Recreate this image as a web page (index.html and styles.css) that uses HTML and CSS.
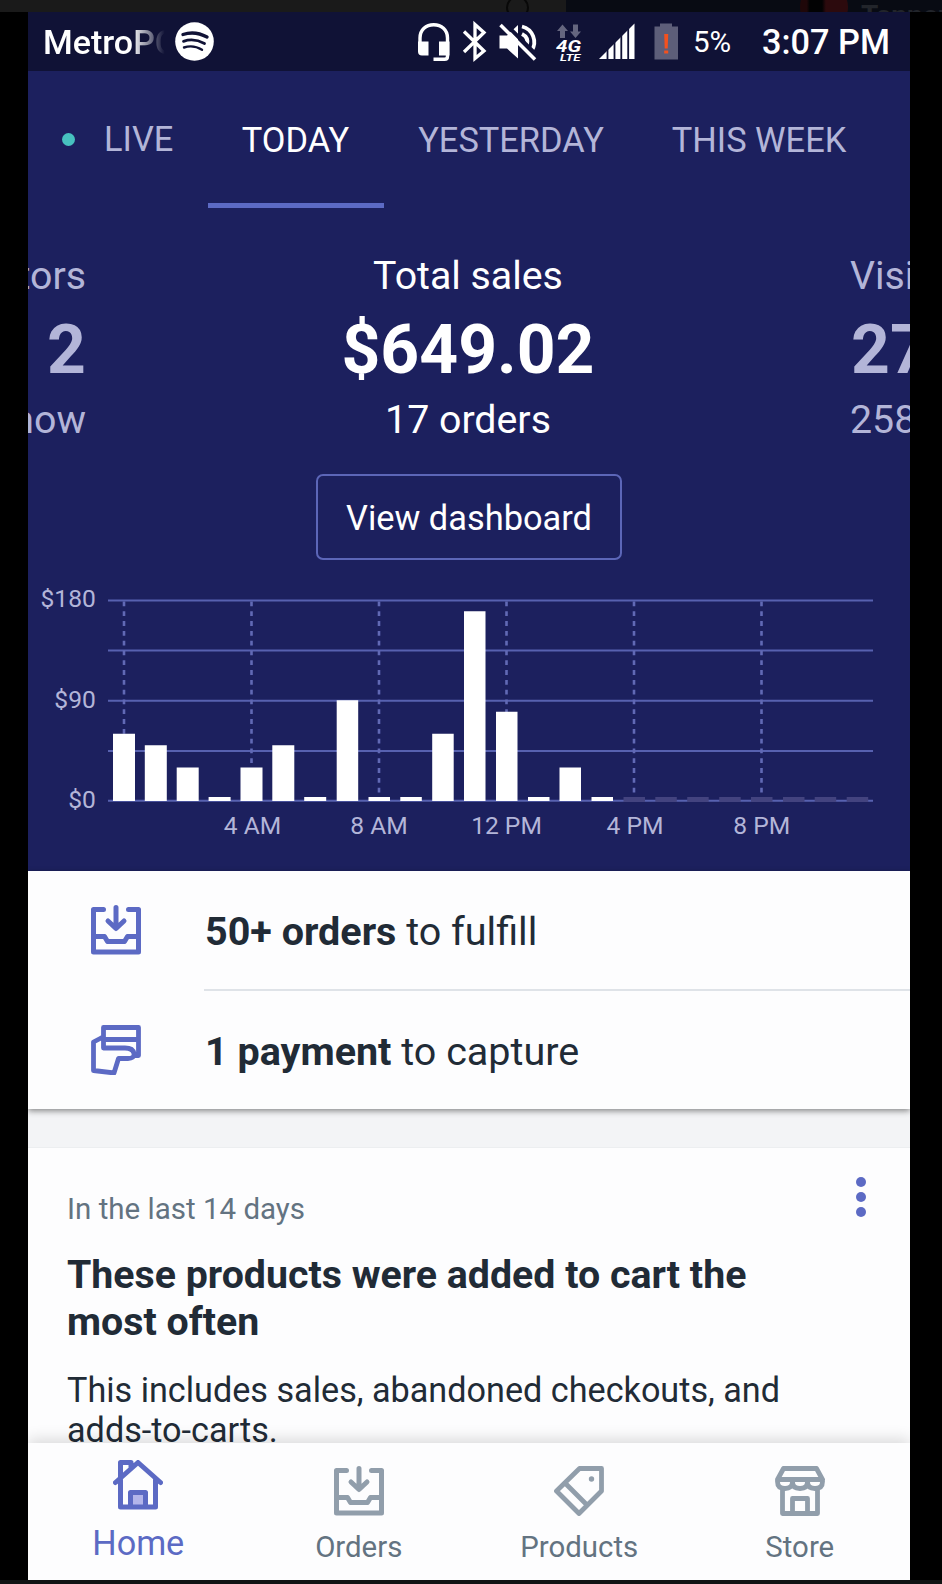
FILE: index.html
```html
<!DOCTYPE html>
<html lang="en">
<head>
<meta charset="utf-8">
<title>Store home</title>
<link rel="stylesheet" href="styles.css">
</head>
<body>
<svg class="sprite" aria-hidden="true">
  <symbol id="inbox" viewBox="0 0 50 50">
    <path d="M12.5 4.5H2.5V47H47.500V4.500H37.500M2.500 31.500H13.500L16.500 36.500H33.500L36.500 31.500H47.500M25 2.500V22M17 16L25 23.500L33 16" fill="none" stroke="currentColor" stroke-width="5" stroke-linecap="round" stroke-linejoin="round"/>
  </symbol>
</svg>
<div class="screen">
  <div class="backdrop">
    <div class="backdrop-left"><span class="ring"></span></div>
    <div class="backdrop-right"><span class="avatar"></span><span class="person">Tanner</span></div>
  </div>
  <main class="phone">
    <header class="status">
      <span class="carrier">MetroPC</span>
      <svg class="spotify" width="39" height="39" viewBox="0 0 39 39"><circle cx="19.500" cy="19.500" r="19.300" fill="#fff"/><g fill="none" stroke="#101236" stroke-linecap="round"><path d="M8 12.500Q20 8.500 32 15" stroke-width="3.400"/><path d="M8.500 19.300Q19 15.800 29.500 21.500" stroke-width="2.800"/><path d="M9 25.500Q18.500 22.500 27 27.800" stroke-width="2.400"/></g></svg>
      <svg class="tray" width="270" height="44" viewBox="414 20 270 44">
        <path d="M420 44V38C420 29.500 426 24.800 433.700 24.800S447.500 29.500 447.500 38V56.500Q447.500 59.300 444.500 59.300H433.500" fill="none" stroke="#fff" stroke-width="3.400"/>
        <path d="M418 41.500H428.500V55.500H422Q418 55.500 418 51.500ZM439 41.500H449.500V55.500H439Z" fill="#fff"/>
        <path d="M464 31.500L484 51L475 58.500V24.500L484 32.500L464 52" fill="none" stroke="#fff" stroke-width="3.300"/>
        <path d="M499.500 35.500H507L518 25V58.500L507 48.500H499.500Z" fill="#fff"/>
        <path d="M522 26.500A16 16 0 0 1 531.500 51M522 34Q529 37.500 527 45" fill="none" stroke="#fff" stroke-width="3.800"/>
        <path d="M504 22.500L538 56.500" stroke="#101236" stroke-width="4"/>
        <path d="M500.500 25L535 59.500" stroke="#fff" stroke-width="3.500"/>
        <path d="M562.500 24.500L568 31H565V38H560V31H557ZM575.500 38L570 31.500H573V24.500H578V31.500H581Z" fill="#65667f"/>
        <text class="net" x="556" y="52.300" textLength="25" lengthAdjust="spacingAndGlyphs">4G</text>
        <text class="lte" x="560" y="61.300" textLength="20.500" lengthAdjust="spacingAndGlyphs">LTE</text>
        <path d="M599 59L634.500 23.500V59Z" fill="#fff"/>
        <path d="M607.500 45V60M614.500 38V60M621.300 31V60M628.200 25V60" stroke="#101236" stroke-width="1.800"/>
        <path d="M654.500 26.500H660V23.500H672V26.500H678V59.500H654.500Z" fill="#5d5e79"/>
        <path d="M664.200 34H668.200L667.700 48.500H664.700ZM664.200 50.500H668.200V53.500H664.200Z" fill="#f4511e"/>
      </svg>
      <span class="percent">5%</span>
      <span class="clock">3:07 PM</span>
    </header>
    <section class="hero">
      <nav class="tabs">
        <span class="tab live"><i class="dot"></i><b>LIVE</b></span>
        <span class="tab active"><b>TODAY</b></span>
        <span class="tab yesterday"><b>YESTERDAY</b></span>
        <span class="tab week"><b>THIS WEEK</b></span>
      </nav>
      <div class="metrics">
        <div class="metric prev"><div class="name">Visitors</div><div class="value">2</div><div class="note">right now</div></div>
        <div class="metric current"><div class="name">Total sales</div><div class="value">$649.02</div><div class="note">17 orders</div></div>
        <div class="metric next"><div class="name">Visitors</div><div class="value">273</div><div class="note">258 visits</div></div>
      </div>
      <button class="dashboard">View dashboard</button>
      <svg class="chart" width="882" height="283" viewBox="28 588 882 283">
        <path class="grid" d="M108 600.600H873M108 650.500H873M108 700.800H873M108 751H873M108 800.800H873"/>
        <path class="ticks" d="M124 601.500V800M251.500 601.500V800M379 601.500V800M506.500 601.500V800M634 601.500V800M761.500 601.500V800"/>
        <path class="bars" d="M113 733.700h22V801h-22zM144.800 745.300h22V801h-22zM176.700 767.500h22V801h-22zM208.600 797h22V801h-22zM240.500 767.500h22V801h-22zM272.300 745.300h22V801h-22zM304.200 797h22V801h-22zM336.700 700.300h21.500V801h-21.500zM368.500 797h21.500V801h-21.500zM400.300 797h21.500V801h-21.500zM432.200 733.700h21.500V801h-21.500zM464 611.300h21.500V801h-21.500zM496 711.700h21.500V801h-21.500zM528 797h21.500V801h-21.500zM559.500 767.500h21.500V801h-21.500zM591.500 797h21.500V801h-21.500z"/>
        <path class="future" d="M623.500 797h21.500v5h-21.500zM655.300 797h21.500v5h-21.500zM687.200 797h21.500v5h-21.500zM719.200 797h21.500v5h-21.500zM751 797h21.500v5h-21.500zM783 797h21.500v5h-21.500zM814.700 797h21.500v5h-21.500zM846.700 797h21.500v5h-21.500z"/>
        <g class="axis-y"><text x="95.800" y="607">$180</text><text x="95.800" y="707.500">$90</text><text x="95.800" y="808">$0</text></g>
        <g class="axis-x"><text x="252.500" y="833.700">4 AM</text><text x="379" y="833.700">8 AM</text><text x="506.500" y="833.700">12 PM</text><text x="635" y="833.700">4 PM</text><text x="761.700" y="833.700">8 PM</text></g>
      </svg>
    </section>
    <section class="tasks">
      <div class="task"><svg class="icon" width="50" height="50"><use href="#inbox"/></svg><p><strong>50+ orders</strong> to fulfill</p></div>
      <div class="task payment"><svg class="icon" width="50" height="50" viewBox="0 0 50 50"><path d="M12.500 23V2.500H47.500V30.500H43M12.500 14.500H47.500M12 12L2.500 17V45.500L23 48L27.500 33.500H37Q43.500 33.500 43 28.500Q42 23 34 23H12.500V14.500" fill="none" stroke="currentColor" stroke-width="4.800" stroke-linejoin="round"/></svg><p><strong>1 payment</strong> to capture</p></div>
    </section>
    <section class="insight">
      <div class="insight-head"><span class="period">In the last 14 days</span><span class="more"><i></i><i></i><i></i></span></div>
      <h2>These products were added to cart the<br>most often</h2>
      <p class="detail">This includes sales, abandoned checkouts, and<br>adds-to-carts.</p>
    </section>
    <nav class="bottom">
      <a class="item selected"><svg width="50" height="50" viewBox="0 0 50 50"><path d="M19 34.500H31V45H19Z" fill="#b3b5ea"/><path d="M2.500 22.500L25 2.500L47.500 22.500M7.500 20V47H42.500V20M7.500 18V2.500H18V7M17.500 46V32.500H32.500V46" fill="none" stroke="currentColor" stroke-width="5" stroke-linecap="round" stroke-linejoin="round"/></svg><span>Home</span></a>
      <a class="item"><svg width="50" height="50"><use href="#inbox"/></svg><span>Orders</span></a>
      <a class="item"><svg width="50" height="50" viewBox="0 0 50 50"><path d="M25.500 2.500H47.500V25L25 47.500L2.500 25ZM11 17L33 39" fill="none" stroke="currentColor" stroke-width="4.800" stroke-linejoin="round"/><circle cx="37.500" cy="13" r="2.700" fill="currentColor"/></svg><span>Products</span></a>
      <a class="item"><svg width="50" height="50" viewBox="0 0 50 50"><path d="M7.500 22V47.500H42.500V22M17.500 47V32.500H32.500V47M8.500 2.500H41.500L47.500 13.500H2.500ZM2.500 13.500V15.500Q2.500 22.500 10 22.500T17.500 15.500Q17.500 22.500 25 22.500T32.500 15.500Q32.500 22.500 40 22.500T47.500 15.500V13.500" fill="none" stroke="currentColor" stroke-width="4.800" stroke-linejoin="round"/></svg><span>Store</span></a>
    </nav>
  </main>
  <div class="floor"></div>
</div>
</body>
</html>
```
FILE: styles.css
```css
* { box-sizing: border-box; }
body { margin: 0; background: #000; font-family: Roboto, "Liberation Sans", sans-serif; }
.sprite { position: absolute; width: 0; height: 0; }
.screen { width: 942px; height: 1584px; overflow: hidden; display: flex; flex-direction: column; }
.backdrop { display: flex; height: 12px; flex: none; overflow: hidden; }
.backdrop-left { width: 566px; flex: none; background: #1a1a1a; padding-left: 506px; }
.ring { display: block; width: 23px; height: 23px; margin-top: -4px; border: 2px solid #080808; border-radius: 50%; }
.backdrop-right { flex: 1; min-width: 0; background: #080b13; display: flex; padding-left: 234px; overflow: hidden; }
.avatar { width: 48px; height: 48px; margin-top: -17px; border-radius: 50%; background: linear-gradient(90deg, #1f0709 14%, #020203 20% 46%, #2c0a0d 54%); flex: none; }
.person { margin: -1px 0 0 13px; font-size: 28px; line-height: 34px; font-weight: 700; color: #22252b; }

.phone { width: 882px; height: 1568px; margin-left: 28px; flex: none; background: #fdfdfe; display: flex; flex-direction: column; overflow: hidden; }
.status { height: 59px; flex: none; background: #101236; color: #fff; display: flex; align-items: center; white-space: nowrap; }
.carrier { width: 123px; margin-left: 15px; overflow: hidden; font-size: 34px; font-weight: 500; line-height: 60px; -webkit-mask-image: linear-gradient(90deg, #000 72%, transparent 99%); mask-image: linear-gradient(90deg, #000 72%, transparent 99%); }
.spotify { margin-left: 9px; }
.tray { margin-left: 200px; }
.net { font: italic 700 17px Roboto, sans-serif; fill: #fff; }
.lte { font: italic 700 9.500px Roboto, sans-serif; fill: #fff; }
.percent { width: 69px; margin-left: 9px; font-size: 29.500px; line-height: 62px; }
.clock { font-size: 34.300px; font-weight: 500; line-height: 60px; }

.hero { height: 800px; flex: none; background: #1c205e; color: #fff; }
.tabs { height: 137px; display: flex; font-size: 34.400px; line-height: 139px; color: #b3b5d8; white-space: nowrap; }
.tab b { font-weight: 400; }
.tab { flex: none; height: 137px; }
.live { width: 180px; display: flex; align-items: center; padding-left: 34px; }
.dot { width: 13px; height: 13px; border-radius: 50%; background: #47c1bf; margin-right: 29px; }
.active { width: 176px; padding-right: 1px; color: #fff; border-bottom: 5px solid #5c6ac4; text-align: center; }
.yesterday { width: 254px; text-align: center; }
.week { width: 242px; text-align: center; }
.metrics { display: grid; grid-template-columns: 58px 1fr 60px; margin-top: 43px; height: 199px; white-space: nowrap; overflow: hidden; }
.metric { display: flex; flex-direction: column; align-items: center; }
.prev { align-items: flex-end; color: #b3b5d8; }
.next { align-items: flex-start; color: #b3b5d8; }
.name, .note { font-size: 39.300px; line-height: 50px; }
.value { font-size: 67.800px; line-height: 80px; font-weight: 700; margin: 9px 0 5px; }
.next .value { padding-left: 1px; }
.dashboard { display: block; width: 306px; height: 86px; margin: 24px 0 0 288px; padding: 2px 0 0; border: 2px solid #5c66b8; border-radius: 7px; background: none; color: #fff; font: 400 34.400px Roboto, sans-serif; }
.chart { display: block; margin-top: 28px; }
.grid { stroke: #5761b0; stroke-width: 2; }
.ticks { stroke: #6169b5; stroke-width: 2.600; stroke-dasharray: 4.800 5; fill: none; }
.bars { fill: #fff; }
.future { fill: #43437f; }
.chart text { font-size: 24.600px; fill: #b3b5d8; }
.axis-y { text-anchor: end; }
.axis-x { text-anchor: middle; }

.tasks { height: 238px; flex: none; background: #fdfdfe; position: relative; box-shadow: 0 2px 6px rgba(0, 0, 0, .45); color: #212b36; }
.task { display: flex; height: 119px; padding: 34px 0 0 63px; }
.task .icon { color: #5c6ac4; flex: none; }
.task p { flex: 1; height: 120px; margin: -34px 0 0 63px; padding-left: 1px; border-bottom: 2px solid #dfe3e8; font-size: 39.500px; line-height: 122px; white-space: nowrap; }
.payment { padding-top: 35px; }
.task.payment p { border: 0; }
.insight { flex: 1; min-height: 0; margin-top: 38px; border-top: 1px solid #eceef0; box-shadow: 0 -38px 0 #f3f4f6; padding: 0 39px; color: #212b36; white-space: nowrap; }
.insight-head { display: flex; justify-content: space-between; height: 96px; padding-top: 29px; }
.period { font-size: 29.500px; line-height: 64px; color: #637381; }
.more { display: flex; flex-direction: column; gap: 5px; margin-right: 5px; }
.more i { width: 10px; height: 10px; border-radius: 50%; background: #5c6ac4; }
h2 { margin: 8px 0 0; font-size: 39.300px; line-height: 47px; font-weight: 700; }
.detail { margin: 24px 0 0; font-size: 34.200px; line-height: 40px; }
.bottom { height: 137px; flex: none; display: grid; grid-template-columns: repeat(4, 1fr); background: #fdfdfe; position: relative; box-shadow: 0 -4px 14px rgba(0, 0, 0, .14); }
.item { display: flex; flex-direction: column; align-items: center; padding-top: 23px; color: #919eab; }
.item svg { flex: none; }
.item span { font-size: 29.400px; line-height: 40px; margin-top: 11px; color: #637381; }
.selected { padding-top: 17px; color: #5c6ac4; }
.selected span { font-size: 34.200px; margin-top: 13px; color: #5c6ac4; }
.floor { height: 4px; flex: none; background: #111414; }
```
